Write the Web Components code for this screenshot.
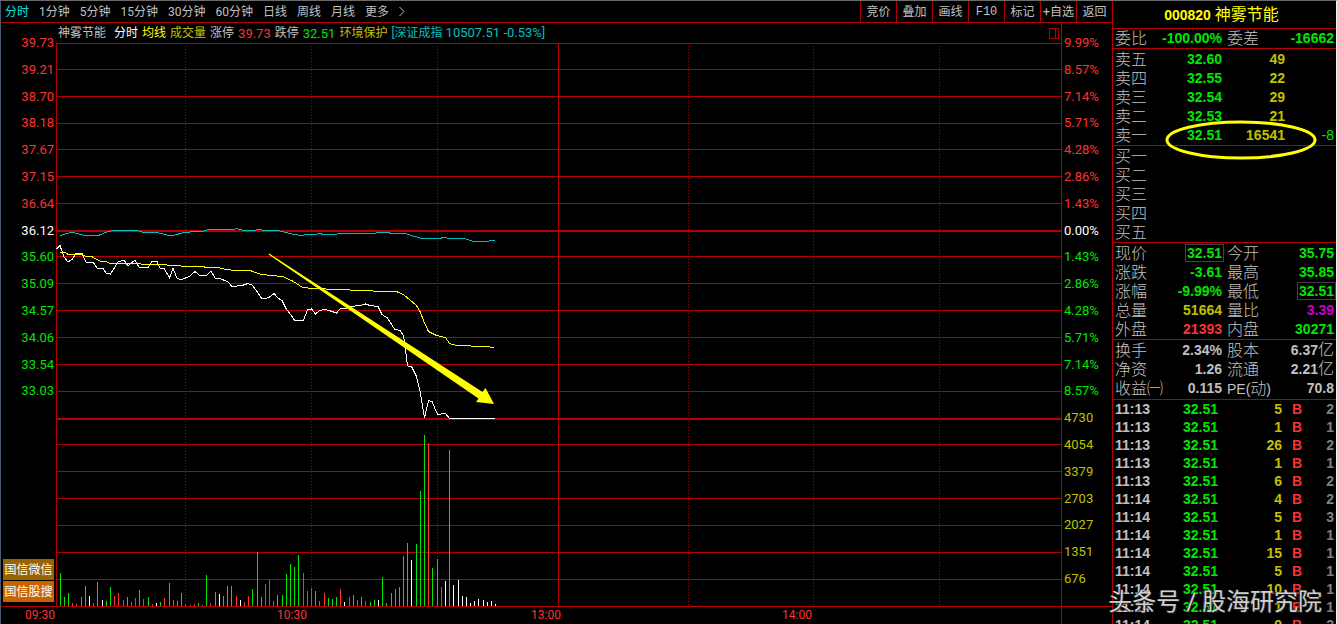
<!DOCTYPE html>
<html lang="zh-CN">
<head>
<meta charset="utf-8">
<title>神雾节能 000820 分时</title>
<style>
  html, body { margin: 0; height: 100%; background: #000; }
  body {
    --line: #b40000;
    --red: #ff3232;
    --green: #00e600;
    --olive: #c0c000;
    --yellow: #ffff00;
    --cyan: #00c0c0;
    --silver: #c0c0c0;
    --ui: Roboto, "Noto Sans CJK SC", sans-serif;
    --num: "Liberation Sans", "Noto Sans CJK SC", sans-serif;
    font-family: var(--ui);
    font-size: 12px;
    color: var(--silver);
  }
</style>
</head>
<body>
<trading-terminal>
  <period-toolbar slot="toolbar"></period-toolbar>
  <intraday-chart slot="chart"></intraday-chart>
  <stock-title slot="side" code="000820">神雾节能</stock-title>
  <stat-table slot="side" group="balance"></stat-table>
  <order-book slot="side"></order-book>
  <stat-table slot="side" group="price"></stat-table>
  <stat-table slot="side" group="capital"></stat-table>
  <tick-list slot="side"></tick-list>
  <span slot="mark">头条号 / 股海研究院</span>
</trading-terminal>

<script>
const define = (name, render) => customElements.define(name, class extends HTMLElement {
  connectedCallback() {
    if (this.shadowRoot) return;
    this.attachShadow({ mode: 'open' }).innerHTML = render(this);
  }
});

define('trading-terminal', () => `
  <style>
    :host { display: grid; grid-template-columns: minmax(0, 1fr) 224px; height: 100vh; box-sizing: border-box;
      border-top: 1px solid #6a6a6a; border-left: 1px solid #4a5870; border-right: 1px solid #f4f4f4;
      overflow: hidden; position: relative; }
    main { display: grid; grid-template-rows: 22px minmax(0, 1fr); min-height: 0; }
    aside { border-left: 1px solid var(--line); min-height: 0; overflow: hidden; }
    .mark { position: absolute; right: 14px; bottom: 4px; font-size: 24px; line-height: 36px; white-space: nowrap;
      color: rgba(232, 232, 232, .88); text-shadow: 1px 1px 1px #222, -1px 0 1px #222; }
  </style>
  <main><slot name="toolbar"></slot><slot name="chart"></slot></main>
  <aside><slot name="side"></slot></aside>
  <div class="mark"><slot name="mark"></slot></div>`);

define('period-toolbar', () => `
  <style>
    :host { display: flex; justify-content: space-between; box-sizing: border-box; height: 22px; border-bottom: 1px solid var(--line); }
    nav { display: flex; }
    .periods { gap: 10px; padding-left: 4px; }
    button { background: none; border: 0; margin: 0; padding: 1px 0 0; font: 12px/20px var(--ui); color: var(--silver); white-space: nowrap; }
    .on { color: #00e0e0; }
    .tools button { width: 36px; border-left: 1px solid var(--line); }
    .tools .code { font-family: "Liberation Mono", monospace; }
    svg { display: block; }
  </style>
  <nav class="periods" aria-label="周期">
    ${['分时', '1分钟', '5分钟', '15分钟', '30分钟', '60分钟', '日线', '周线', '月线', '更多']
      .map((t, i) => `<button class="${i ? '' : 'on'}">${t}</button>`).join('')}
    <button aria-label="展开"><svg width="6" height="20" viewBox="0 0 6 20" fill="none" stroke="#c0c0c0"><path d="M.5 5 5 9.500.5 14"/></svg></button>
  </nav>
  <nav class="tools" aria-label="工具">
    ${['竞价', '叠加', '画线', 'F10', '标记', '+自选', '返回']
      .map(t => `<button class="${t === 'F10' ? 'code' : ''}">${t}</button>`).join('')}
  </nav>`);

/* Volume bars: x, height, colour (g = down, r = up, w = flat). */
const bars = `60,33g 64,9g 68,13g 72,3r 76,2r 81,9g 85,20g 89,10w 93,3r 97,24g 102,6w 106,5g 110,19g 114,10r 118,13r
123,6r 127,9g 131,4r 135,8r 139,16g 143,7r 148,9g 152,2r 156,3w 160,4g 164,8r 169,23g 173,6r 177,5g 181,13g 185,2r
190,1r 194,2r 198,3g 202,1r 206,31g 210,3r 215,14g 219,12w 223,10g 227,20g 231,20g 236,10r 240,6w 244,4r 248,10r
252,17g 257,54g 261,9g 265,22r 269,26r 273,5r 277,11g 282,11g 286,32g 290,42g 294,39g 298,51g 303,33r 307,15r 311,18r
315,15g 319,5r 324,13r 328,8g 332,7g 336,9g 340,17r 344,4w 349,9r 353,11g 357,6r 361,9g 365,5r 370,4g 374,6g 378,6w
382,29g 386,3g 391,13g 395,17g 399,19g 403,50g 407,63g 411,46w 416,62g 420,115g 424,171g 428,163r 432,38g 437,47g
441,19r 445,25w 449,156g 453,21w 458,26w 462,10w 466,9w 470,3w 474,5w 478,7w 483,6w 487,4w 491,5w 495,2w`
  .split(/\s+/).map(s => s.match(/(\d+),(\d+)(\w)/));
const ink = { g: 'var(--green)', r: 'var(--red)', w: '#fff' };
const gridY = [43, 69, 96, 123, 149, 176, 203, 256, 283, 310, 337, 364, 391, 444, 471, 498, 525, 552, 579];
const priceLine = `56.5,249 60,245.5 64,257 68,262 72,259.5 76,253.5 82,253.5 86,262 93,262 97,268 103,268.5 106,273 110.5,274
118,262 124,260 128,266 131,263 135,260.5 139.5,268 148,267.5 152,261.5 157,261.5 160,268 164,268 169.5,278 173,268.5 177,278
181,280 190,276 195,271.5 199,275 207,275 211,271 215,278 220,278.5 228,282 232,286.5 242,285.5 248,283.5 252,285 257,291.5
262,299 269,297.5 274,293.5 278,298 282,300.5 286,308.5 294.5,320 303.5,320 307.5,310 311.5,309 315.5,314 319.5,310.5 325,309.5
330.5,311 336.5,313 340.5,308.5 346,308.5 350,306.5 360,305.5 365.5,304 370,305.5 378,306.5 382,314.5 387.5,318 394.5,329
400,330.5 403.5,335.5 405.5,350 407.5,366 411.5,366.5 416,375.5 420,391 424.5,418 428.5,400.5 432,401.5 437.5,414.5 445.5,413.5 449.5,418.5 494.5,418.5`;
const averageLine = `60,252.5 65.5,252.5 68,254.5 81.5,254.5 85,256 91.5,256.5 100,261 107,262 110.5,263.5 139,263.5 143,264.5
166,264.5 168,265.5 180,265.5 181.5,266.5 203,266.5 206,267.5 218,267.5 226.5,269.5 235,270.5 250,270.5 260,274 270,275.5
283,276.5 293.5,281.5 302.5,287.5 313,288.5 338,289.5 373,291 397.5,292 403.5,294.5 410,300 416.5,305.5 420.5,312.5 424.5,323
428.5,331.5 436.5,335.5 445.5,337.5 449.5,343.5 456.5,345.5 485,346.5 494.5,347.5`;
const indexLine = `60,235.5 66.5,233.5 72.5,232.5 85,235.5 98.5,235.5 105,232.5 112.5,230.5 137.5,230.5 143.5,232.5 157.5,232.5
168.5,235.5 173.5,235.5 183.5,232.5 204,231 208.5,229.5 233,229.5 236.5,228.5 243.5,230.5 254,230.5 258,229.5 266.5,230.5
280,231 293.5,234.5 301.5,235.5 306.5,234.5 315,234.5 319.5,233.5 323.5,234.5 336,234.5 338.5,233.5 375,233.5 377.5,232.5
388.5,232.5 390.5,233.5 405,233.5 420,238 441.5,238 446,237.5 448.5,238.5 464,238.5 473.5,241.5 488.5,241.5 490,240.5 494.5,240.5`;

const prices = ['39.73', '39.21', '38.70', '38.18', '37.67', '37.15', '36.64', '36.12', '35.60', '35.09', '34.57', '34.06', '33.54', '33.03'];
const percents = ['9.99%', '8.57%', '7.14%', '5.71%', '4.28%', '2.86%', '1.43%', '0.00%', '1.43%', '2.86%', '4.28%', '5.71%', '7.14%', '8.57%'];
const volumes = ['4730', '4054', '3379', '2703', '2027', '1351', '676'];
const tone = i => i < 7 ? 'up' : i === 7 ? 'flat' : i < 14 ? 'down' : 'vol';
const labels = list => list.map((t, i) => `<span class="${tone(i)}">${t}</span>`).join('');

define('intraday-chart', () => `
  <style>
    :host { display: grid; grid-template-columns: 55px minmax(0, 1fr) 51px; grid-template-rows: 20px minmax(0, 1fr) 18px; min-height: 0; }
    .axis { grid-row: 1 / 3; display: grid; grid-template-rows: repeat(21, minmax(0, 1fr)) 14px; padding-top: 6px; font-size: 13px; align-items: center; min-height: 0; }
    .left { grid-column: 1; text-align: right; }
    .left > span { padding-right: 2px; }
    .right { grid-column: 3; border-left: 1px solid var(--line); }
    .right > span { padding-left: 2px; }
    .up { color: var(--red); } .flat { color: #fff; } .down { color: var(--green); } .vol, .olive { color: var(--olive); }
    .links { grid-row: 15 / 23; align-self: end; display: grid; gap: 1px; padding: 0 2px 4px; }
    .links button { border: 0; padding: 1px 0 0; margin: 0; height: 21px; font: 12px/20px var(--ui); color: #fff; background: #966400; }
    .links button + button { background: #c86400; }
    .info { grid-column: 2; grid-row: 1; display: flex; gap: 4px; padding: 0 2px; line-height: 20px; white-space: nowrap; align-items: center; }
    .info .up, .info .down, .num { font-size: 13px; line-height: 1; }
    .name { margin-right: 4px; }
    .bright { color: var(--yellow); } .cyan { color: var(--cyan); }
    .info svg { margin-left: auto; }
    .plot { grid-column: 2; grid-row: 2; width: 100%; height: 100%; display: block; min-height: 0; }
    .plot * { vector-effect: non-scaling-stroke; }
    .times { grid-column: 1 / 3; grid-row: 3; border-top: 1px solid var(--line); display: grid; padding-left: 24px;
      grid-template-columns: 252fr 254fr 251fr 279fr; color: var(--red); line-height: 17px; }
    .corner { grid-column: 3; grid-row: 3; border-left: 1px solid var(--line); border-top: 1px solid var(--line); }
  </style>
  <div class="axis left">${labels(prices)}
    <div class="links"><button>国信微信</button><button>国信股搜</button></div>
  </div>
  <div class="info">
    <span class="name">神雾节能</span><span class="flat">分时</span><span class="bright">均线</span><span class="olive">成交量</span>
    <span>涨停</span><span class="up">39.73</span><span>跌停</span><span class="down">32.51</span>
    <span class="olive">环境保护</span><span class="cyan">[深证成指 <span class="num">10507.51 -0.53%]</span></span>
    <svg width="10" height="11" viewBox="0 0 10 11" fill="none" stroke="#b40000" shape-rendering="crispEdges"><path d="M.5.5h9v10h-9zM6.5.5v10"/></svg>
  </div>
  <svg class="plot" viewBox="56 43 1005 563" preserveAspectRatio="none" role="img" aria-label="分时走势">
    <g shape-rendering="crispEdges" fill="none" stroke="#b40000">
      <path d="${gridY.map(y => `M56 ${y}.5H1061`).join('')}M56.5 43V606M558.5 43V606"/>
      <path stroke-width="2" d="M56 231H1061M56 419H1061"/>
      <path stroke-dasharray="1 2" d="M185.5 46V606M311.5 46V606M437.5 46V606M688.5 46V606M813.5 46V606M939.5 46V606"/>
    </g>
    <g shape-rendering="crispEdges">
      ${bars.map(([, x, h, c]) => `<rect x="${x}" y="${606 - h}" width="1" height="${h}" style="fill:${ink[c]}"/>`).join('')}
    </g>
    <g fill="none" shape-rendering="crispEdges">
      <polyline stroke="#00c0c0" points="${indexLine}"/>
      <polyline stroke="#fff" points="${priceLine}"/>
      <polyline stroke="#ff0" points="${averageLine}"/>
    </g>
    <path fill="#ff0" d="M268.500 254.600 269.300 253.600 482.500 392 485.500 388 494 404 476 402 478.500 398.500Z"/>
  </svg>
  <div class="axis right">${labels([...percents, ...volumes])}</div>
  <div class="times"><span>09:30</span><span>10:30</span><span>13:00</span><span>14:00</span></div>
  <div class="corner"></div>`);

define('stock-title', el => `
  <style>
    :host { display: flex; justify-content: center; gap: 4px; padding-right: 6px; height: 27px; line-height: 28px; border-bottom: 1px solid var(--line);
      color: var(--yellow); font-size: 16px; font-family: var(--num); }
    b { font-size: 14px; }
  </style>
  <b>${el.getAttribute('code')}</b><span><slot></slot></span>`);

const tableCss = `
  :host { display: block; border-bottom: 1px solid var(--line); position: relative; }
  table { width: 100%; table-layout: fixed; border-collapse: collapse; font-family: var(--num); }
  th, td { padding: 0; height: 19px; line-height: 19px; white-space: nowrap; }
  th { text-align: left; font-weight: 300; font-size: 16px; padding-left: 2px; }
  td { text-align: right; font-weight: 700; font-size: 14px; }
  td:last-child { padding-right: 2px; }
  .g { color: var(--green); } .r { color: var(--red); } .y { color: var(--olive); } .m { color: #c800c8; } .s { color: var(--silver); }
`;
const stats = {
  balance: [['委比', '-100.00%', 'g', '委差', '-16662', 'g']],
  price: [
    ['现价', '32.51', 'g box', '今开', '35.75', 'g'],
    ['涨跌', '-3.61', 'g', '最高', '35.85', 'g'],
    ['涨幅', '-9.99%', 'g', '最低', '32.51', 'g box'],
    ['总量', '51664', 'y', '量比', '3.39', 'm'],
    ['外盘', '21393', 'r', '内盘', '30271', 'g']],
  capital: [
    ['换手', '2.34%', 's', '股本', '6.37<i>亿</i>', 's'],
    ['净资', '1.26', 's', '流通', '2.21<i>亿</i>', 's'],
    ['收益㈠', '0.115', 's', '<small>PE(</small>动<small>)</small>', '70.8', 's']]
};
define('stat-table', el => `
  <style>${tableCss}
    :host { padding-top: 1px; }
    :host([group="balance"]) { padding-top: 0; }
    :host([group="capital"]) { padding-bottom: 1px; }
    th + td + th { padding-left: 5px; }
    i { font-style: normal; font-weight: 300; font-size: 16px; line-height: 1; }
    small { font-size: 14px; line-height: 1; }
    .box span { outline: 1px solid #404040; display: inline-block; line-height: 16px; padding: 0 1px; margin-right: -1px; }
  </style>
  <table><colgroup><col style="width:48px"><col style="width:61px"><col style="width:48px"><col></colgroup>
    ${stats[el.getAttribute('group')].map(([a, b, c, d, e, f]) =>
      `<tr><th scope="row">${a}</th><td class="${c}"><span>${b}</span></td><th scope="row">${d}</th><td class="${f}"><span>${e}</span></td></tr>`).join('')}
  </table>`);

const asks = [['五', '32.60', 49], ['四', '32.55', 22], ['三', '32.54', 29], ['二', '32.53', 21], ['一', '32.51', 16541, '-8']];
define('order-book', () => `
  <style>${tableCss}
    .asks, .bids { padding-top: 1px; }
    .asks { border-bottom: 1px solid var(--line); }
    td:last-child { font-weight: 400; }
    svg { position: absolute; left: 52px; top: 71px; }
  </style>
  <div class="asks"><table><colgroup><col style="width:48px"><col style="width:61px"><col style="width:63px"><col></colgroup>
    ${asks.map(([n, p, v, d = '']) => `<tr><th scope="row">卖${n}</th><td class="g">${p}</td><td class="y">${v}</td><td class="g">${d}</td></tr>`).join('')}
  </table></div>
  <div class="bids"><table>
    ${[...'一二三四五'].map(n => `<tr><th scope="row">买${n}</th></tr>`).join('')}
  </table></div>
  <svg width="152" height="40" viewBox="0 0 152 40" aria-hidden="true"><ellipse cx="76" cy="20" rx="74" ry="18" fill="none" stroke="#ff0" stroke-width="3"/></svg>`);

const ticks = [['11:13', 5, 2], ['11:13', 1, 1], ['11:13', 26, 2], ['11:13', 1, 1], ['11:13', 6, 2], ['11:14', 4, 2], ['11:14', 5, 3],
  ['11:14', 1, 1], ['11:14', 15, 1], ['11:14', 5, 1], ['11:14', 10, 1], ['11:14', 1, 1], ['11:14', 9, 2]];
define('tick-list', () => `
  <style>${tableCss}
    :host { border: 0; }
    td { height: 18px; line-height: 18px; }
    td:first-child { text-align: left; padding-left: 2px; }
    td:last-child { color: #808080; }
  </style>
  <table><colgroup><col style="width:48px"><col style="width:57px"><col style="width:64px"><col style="width:20px"><col></colgroup>
    ${ticks.map(([t, v, n]) => `<tr><td>${t}</td><td class="g">32.51</td><td class="y">${v}</td><td class="r">B</td><td>${n}</td></tr>`).join('')}
  </table>`);
</script>
</body>
</html>
